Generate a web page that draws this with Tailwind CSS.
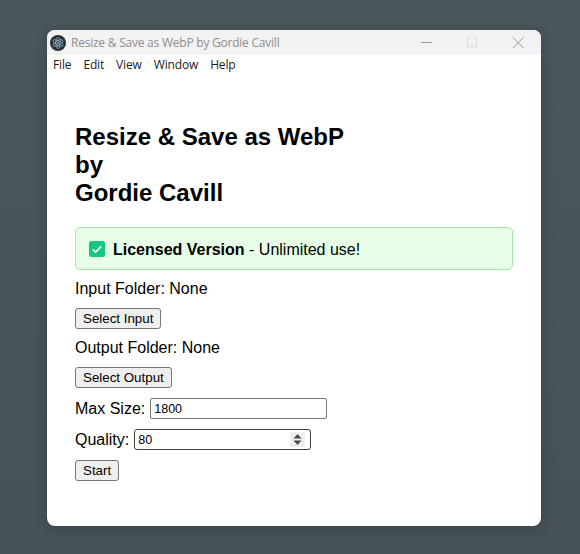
<!DOCTYPE html>
<html lang="en">
<head>
    <meta charset="UTF-8">
    <title>Resize & Save as WebP by Gordie Cavill</title>
    <script src="https://cdn.jsdelivr.net/npm/@tailwindcss/browser@4"></script>
</head>
<body class="w-[580px] h-[554px] overflow-hidden bg-gradient-to-b from-[#4a555c] to-[#475158] font-['Liberation_Sans',sans-serif]">
    <div class="pt-[30px] pl-[47px]">
        <div class="w-[494px] h-[496px] bg-white rounded-[8px] overflow-hidden text-black shadow-[0_2px_14px_rgba(0,0,0,0.18)]">
            <!-- title bar -->
            <div class="h-[25px] bg-[#f2f2f2] flex items-center pl-[3px]">
                <svg width="16" height="16" viewBox="0 0 16 16" class="shrink-0">
                    <circle cx="8" cy="8" r="8" fill="#2b2f39"/>
                    <g fill="none" stroke="#8fb3c2" stroke-width="0.8">
                        <ellipse cx="8" cy="8" rx="5.5" ry="2.2" transform="rotate(30 8 8)"/>
                        <ellipse cx="8" cy="8" rx="5.5" ry="2.2" transform="rotate(90 8 8)"/>
                        <ellipse cx="8" cy="8" rx="5.5" ry="2.2" transform="rotate(150 8 8)"/>
                    </g>
                    <circle cx="8" cy="8" r="1" fill="#8fb3c2"/>
                </svg>
                <span class="ml-[5px] text-[12px] text-[#8e8e8e] font-['Open_Sans',sans-serif] tracking-[-0.23px] whitespace-nowrap">Resize &amp; Save as WebP by Gordie Cavill</span>
                <div class="ml-auto flex items-center">
                    <svg width="46" height="25" viewBox="0 0 46 25"><path d="M18 12.5h11" stroke="#9a9a9a" stroke-width="1"/></svg>
                    <svg width="46" height="25" viewBox="0 0 46 25"><rect x="18.5" y="8" width="9" height="9" fill="none" stroke="#dcdcdc" stroke-width="1"/></svg>
                    <svg width="46" height="25" viewBox="0 0 46 25"><path d="M18 7.5l10.500 10.500M28.500 7.500L18 18" stroke="#9a9a9a" stroke-width="1"/></svg>
                </div>
            </div>
            <!-- menu bar -->
            <div class="h-[20px] flex items-center pl-[6px] gap-[12px] text-[12px] tracking-[-0.15px] text-[#1c1c1c] font-['Open_Sans',sans-serif]">
                <span>File</span><span>Edit</span><span>View</span><span>Window</span><span>Help</span>
            </div>
            <!-- content -->
            <div class="px-[28px] pt-[48px] text-[16px]">
                <h1 class="w-[300px] text-[24px] leading-[28px] font-bold">Resize &amp; Save as WebP by<br>Gordie Cavill</h1>
                <div class="mt-[20px] h-[43px] bg-[#e6ffe6] border border-[#a5e8a5] rounded-[5px] flex items-center pl-[13px]">
                    <svg width="16" height="16" viewBox="0 0 16 16" class="shrink-0">
                        <rect width="16" height="16" rx="2.500" fill="#16c784"/>
                        <path d="M3.800 8.300l2.900 2.800 5.500-5.800" fill="none" stroke="#fff" stroke-width="1.700"/>
                    </svg>
                    <span class="ml-[8px] pt-[2px]"><b>Licensed Version</b> - Unlimited use!</span>
                </div>
                <p class="mt-[10px] leading-[18px]">Input Folder: None</p>
                <button class="block mt-[10px] h-[21px] px-[7px] text-[13.333px] bg-[#efefef] border border-[#767676] rounded-[3px]">Select Input</button>
                <p class="mt-[10px] leading-[18px]">Output Folder: None</p>
                <button class="block mt-[10px] h-[21px] px-[7px] text-[13.333px] bg-[#efefef] border border-[#767676] rounded-[3px]">Select Output</button>
                <div class="mt-[10px] flex items-center h-[21px]">
                    <span>Max Size:</span>
                    <div class="ml-[5px] w-[177px] h-[21px] border border-[#767676] rounded-[2px] pl-[3px] text-[12.5px] leading-[20px]">1800</div>
                </div>
                <div class="mt-[10px] flex items-center h-[21px]">
                    <span>Quality:</span>
                    <div class="ml-[5px] w-[177px] h-[21px] border border-[#404040] rounded-[3px] pl-[3px] pr-[5px] text-[12.5px] leading-[19px] flex items-center justify-between">
                        <span class="pt-[1px]">80</span>
                        <span class="w-[15px] h-[15px] bg-[#efefef] flex items-center justify-center">
                            <svg width="9" height="11" viewBox="0 0 9 11"><path d="M4.500 0L8.500 4.500H0.500ZM4.500 11L0.500 6.500H8.500Z" fill="#4a4a4a"/></svg>
                        </span>
                    </div>
                </div>
                <button class="block mt-[10px] h-[21px] px-[7px] text-[13.333px] bg-[#efefef] border border-[#767676] rounded-[3px]">Start</button>
            </div>
        </div>
    </div>
</body>
</html>
